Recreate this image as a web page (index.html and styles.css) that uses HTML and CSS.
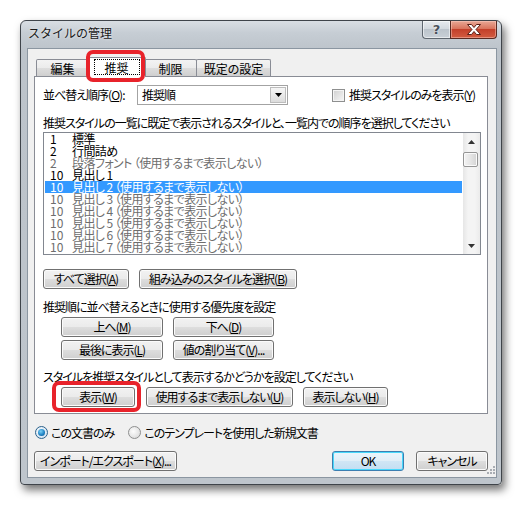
FILE: index.html
```html
<!DOCTYPE html>
<html lang="ja">
<head>
<meta charset="utf-8">
<title>スタイルの管理</title>
<link rel="stylesheet" href="styles.css">
</head>
<body>
<div class="window">
  <div class="titlebar">
    <div class="title">スタイルの管理</div>
    <div class="caption-btns">
      <div class="cap help">?</div>
      <div class="cap close">
        <svg width="16" height="11" viewBox="0 0 16 11">
          <path d="M1.5 0.5 H5.5 L8 3.5 L10.5 0.5 H14.5 L10 5.5 L14.5 10.5 H10.5 L8 7.5 L5.5 10.5 H1.5 L6 5.5 Z" fill="#fff" stroke="#5a1f16" stroke-width="1" stroke-linejoin="round"/>
        </svg>
      </div>
    </div>
  </div>
  <div class="client">
    <div class="tabs">
      <div class="tab t-edit">編集</div>
      <div class="tab active"><span class="focus">推奨</span></div>
      <div class="tab t-limit">制限</div>
      <div class="tab t-default">既定の設定</div>
    </div>
    <div class="panel">
      <div class="sort-row">
        <span class="sort-label">並べ替え順序(<u>O</u>):</span>
        <div class="combo">
          <span class="combo-text">推奨順</span>
          <div class="drop"><svg width="7" height="4" viewBox="0 0 7 4"><path d="M0 0 H7 L3.5 4 Z" fill="#000"/></svg></div>
        </div>
        <div class="check"><span class="box"></span><span>推奨スタイルのみを表示(<u>Y</u>)</span></div>
      </div>
      <div class="caption first-cap">推奨スタイルの一覧に既定で表示されるスタイルと、一覧内での順序を選択してください</div>
      <div class="listbox">
        <div class="items">
          <div class="item"><span class="num">1</span><span>標準</span></div>
          <div class="item"><span class="num">2</span><span>行間詰め</span></div>
          <div class="item dim"><span class="num">2</span><span>段落フォント （使用するまで表示しない）</span></div>
          <div class="item"><span class="num">10</span><span>見出し 1</span></div>
          <div class="item selected"><span class="num">10</span><span>見出し 2 （使用するまで表示しない）</span></div>
          <div class="item dim"><span class="num">10</span><span>見出し 3 （使用するまで表示しない）</span></div>
          <div class="item dim"><span class="num">10</span><span>見出し 4 （使用するまで表示しない）</span></div>
          <div class="item dim"><span class="num">10</span><span>見出し 5 （使用するまで表示しない）</span></div>
          <div class="item dim"><span class="num">10</span><span>見出し 6 （使用するまで表示しない）</span></div>
          <div class="item dim"><span class="num">10</span><span>見出し 7 （使用するまで表示しない）</span></div>
        </div>
        <div class="vscroll">
          <div class="arrow"><svg width="7" height="4" viewBox="0 0 7 4"><path d="M0 4 H7 L3.5 0 Z" fill="#333"/></svg></div>
          <div class="track"><div class="thumb"></div></div>
          <div class="arrow"><svg width="7" height="4" viewBox="0 0 7 4"><path d="M0 0 H7 L3.5 4 Z" fill="#333"/></svg></div>
        </div>
      </div>
      <div class="btn-row row-select">
        <div class="btn w-all">すべて選択(<u>A</u>)</div>
        <div class="btn w-builtin">組み込みのスタイルを選択(<u>B</u>)</div>
      </div>
      <div class="caption cap-priority">推奨順に並べ替えるときに使用する優先度を設定</div>
      <div class="prio-grid">
        <div class="btn">上へ(<u>M</u>)</div>
        <div class="btn">下へ(<u>D</u>)</div>
        <div class="btn">最後に表示(<u>L</u>)</div>
        <div class="btn">値の割り当て(<u>V</u>)...</div>
      </div>
      <div class="caption cap-show">スタイルを推奨スタイルとして表示するかどうかを設定してください</div>
      <div class="btn-row row-show">
        <div class="btn w-show">表示(<u>W</u>)</div>
        <div class="btn w-until">使用するまで表示しない(<u>U</u>)</div>
        <div class="btn w-hide">表示しない(<u>H</u>)</div>
      </div>
    </div>
    <div class="radio-row">
      <div class="radio-opt"><span class="radio on"></span><span>この文書のみ</span></div>
      <div class="radio-opt second"><span class="radio"></span><span>このテンプレートを使用した新規文書</span></div>
    </div>
    <div class="bottom-row">
      <div class="btn w-import">インポート/エクスポート(<u>X</u>)...</div>
      <div class="btn default w-ok">OK</div>
      <div class="btn w-cancel">キャンセル</div>
    </div>
    <svg class="grip" width="10" height="10" viewBox="0 0 10 10">
      <g fill="#a9adb3">
        <rect x="8" y="0" width="2" height="2"/>
        <rect x="5" y="3" width="2" height="2"/><rect x="8" y="3" width="2" height="2"/>
        <rect x="2" y="6" width="2" height="2"/><rect x="5" y="6" width="2" height="2"/><rect x="8" y="6" width="2" height="2"/>
      </g>
    </svg>
  </div>
</div>
<div class="mark mark-tab"></div>
<div class="mark mark-show"></div>
</body>
</html>
```

FILE: styles.css
```css
* { box-sizing: border-box; }
html, body { margin: 0; padding: 0; }
body {
  width: 524px;
  height: 505px;
  background: #fff;
  font-family: "Noto Sans CJK JP", "Noto Sans", sans-serif;
  font-size: 12px;
  line-height: 14px;
  letter-spacing: -1px;
  color: #000;
  font-feature-settings: "palt";
  position: relative;
  overflow: hidden;
}
u { text-decoration: underline; text-underline-offset: 1px; }

.window {
  margin: 20px 0 0 20px;
  width: 482px;
  height: 465px;
  border: 1px solid #3f444a;
  border-radius: 6px 6px 4px 4px;
  background: linear-gradient(#d9dee3 0, #c6cdd4 12px, #bcc3ca 30px, #bec5cc 100%);
  box-shadow: 3px 5px 9px rgba(0,0,0,0.55);
  padding: 0 4px 6px 6px;
  display: flex;
  flex-direction: column;
}
.titlebar {
  height: 27px;
  display: flex;
  align-items: flex-start;
}
.title {
  margin: 5px 0 0 1px;
  font-feature-settings: normal;
  letter-spacing: 0;
  color: #1a1a1a;
  text-shadow: 0 0 3px rgba(255,255,255,0.8);
}
.caption-btns { margin-left: auto; display: flex; }
.cap {
  height: 18px;
  display: flex;
  align-items: center;
  justify-content: center;
  border: 1px solid #5f6770;
  border-top: none;
}
.help {
  width: 28px;
  border-radius: 0 0 0 4px;
  border-right: none;
  background: linear-gradient(#e7ebef 0%, #d3d9df 45%, #bcc4cc 50%, #c9d0d7 100%);
  box-shadow: inset 0 0 0 1px rgba(255,255,255,0.55);
  font-family: "DejaVu Sans", sans-serif;
  font-weight: bold;
  font-size: 13px;
  letter-spacing: 0;
  color: #4a515b;
  text-shadow: 0 0 2px #fff;
  line-height: 16px;
}
.close {
  width: 47px;
  border-radius: 0 0 4px 0;
  border-color: #5a2a22;
  background: linear-gradient(#e9a896 0%, #d9745d 45%, #c4402a 50%, #d25c41 100%);
  box-shadow: inset 0 0 0 1px rgba(255,210,200,0.45);
}

.client {
  flex: 1;
  position: relative;
  background: #f0f0f0;
  border: 1px solid #8b96a1;
  display: flex;
  flex-direction: column;
}
.tabs {
  height: 27px;
  padding-left: 8px;
  display: flex;
  align-items: flex-end;
  letter-spacing: 0;
}
.tab {
  height: 17px;
  border: 1px solid #898c95;
  border-bottom: none;
  border-radius: 2px 2px 0 0;
  background: linear-gradient(#f3f3f3 0%, #ebebeb 50%, #dddddd 51%, #cfcfcf 100%);
  display: flex;
  align-items: center;
  justify-content: center;
  line-height: 15px;
}
.t-edit { width: 53px; }
.t-limit { width: 53px; }
.t-default { width: 75px; margin-left: -1px; }
.tab.active {
  width: 59px;
  height: 20px;
  margin: 0 -2px -1px -2px;
  position: relative;
  z-index: 1;
  background: #fff;
  align-items: flex-start;
  padding-top: 1px;
}
.focus {
  width: 46px;
  height: 16px;
  border: 1px dotted #000;
  display: flex;
  align-items: center;
  justify-content: center;
}

.panel {
  margin: 0 8px 0 6px;
  height: 338px;
  background: #fff;
  border: 1px solid #898c95;
  padding: 8px 0 0 8px;
  display: flex;
  flex-direction: column;
  align-items: flex-start;
}
.sort-row {
  height: 20px;
  display: flex;
  align-items: center;
}
.sort-label { width: 94px; white-space: nowrap; }
.combo {
  width: 151px;
  height: 20px;
  border: 1px solid #a3a3a3;
  display: flex;
  align-items: center;
  padding: 1px;
}
.combo-text { flex: 1; padding-left: 3px; }
.drop {
  width: 16px;
  height: 16px;
  border: 1px solid #bdbdbd;
  background: linear-gradient(#f6f6f6, #dcdcdc);
  display: flex;
  align-items: center;
  justify-content: center;
}
.check {
  margin-left: 44px;
  display: flex;
  align-items: center;
  gap: 4px;
  white-space: nowrap;
}
.box {
  width: 13px;
  height: 13px;
  border: 1px solid #8e8f8f;
  background: linear-gradient(135deg, #cfcfcf, #f7f7f7);
  box-shadow: inset 0 0 0 1px #f4f4f4;
}
.caption { height: 14px; white-space: nowrap; }
.first-cap { margin-top: 11px; }

.listbox {
  margin-top: 2px;
  width: 438px;
  height: 123px;
  border: 1px solid #828790;
  display: flex;
}
.items { flex: 1; padding: 0 1px; }
.item {
  height: 12px;
  line-height: 12px;
  display: flex;
  padding-left: 5px;
  white-space: pre;
  letter-spacing: -0.6px;
}
.num { width: 22px; letter-spacing: 0; }
.item.dim { color: #6d6d6d; }
.item.selected { background: #3399ff; color: #fff; }
.vscroll {
  width: 17px;
  display: flex;
  flex-direction: column;
  background: linear-gradient(to right, #e6e6e6, #f4f4f4 30%, #f4f4f4 70%, #ebebeb);
}
.arrow {
  height: 17px;
  display: flex;
  align-items: center;
  justify-content: center;
}
.track { flex: 1; padding: 2px 2px 0 0; }
.thumb {
  width: 15px;
  height: 15px;
  border: 1px solid #959595;
  border-radius: 2px;
  background: linear-gradient(to right, #f3f3f3, #e5e5e5 50%, #d3d3d3);
  box-shadow: inset 0 0 0 1px #fafafa;
}

.btn {
  height: 20px;
  border: 1px solid #707070;
  border-radius: 3px;
  background: linear-gradient(#f2f2f2 0%, #ebebeb 48%, #dddddd 52%, #cfcfcf 100%);
  box-shadow: inset 0 0 0 1px #fbfbfb;
  display: flex;
  align-items: center;
  justify-content: center;
  white-space: nowrap;
}
.btn.default {
  border-color: #3c7fb1;
  box-shadow: inset 0 0 0 1px #48d8fb;
  background: linear-gradient(#eaf5fc 0%, #e1eef7 48%, #d0e6f5 52%, #c3def2 100%);
}
.btn-row { display: flex; }
.row-select { margin-top: 14px; gap: 10px; }
.w-all { width: 86px; }
.w-builtin { width: 158px; }
.cap-priority { margin-top: 11px; }
.prio-grid {
  margin: 3px 0 0 18px;
  display: grid;
  grid-template-columns: 102px 101px;
  column-gap: 10px;
  row-gap: 3px;
}
.cap-show { margin-top: 10px; }
.row-show { margin: 3px 0 0 18px; }
.w-show { width: 74px; }
.w-until { width: 147px; margin-left: 11px; }
.w-hide { width: 85px; margin-left: 10px; }

.radio-row {
  margin: 12px 0 0 7px;
  height: 13px;
  display: flex;
  align-items: center;
}
.radio-opt { display: flex; align-items: center; gap: 3px; }
.radio-opt.second { margin-left: 14px; }
.radio {
  width: 13px;
  height: 13px;
  border-radius: 50%;
  border: 1px solid #8e8f8f;
  background: radial-gradient(circle at 40% 40%, #fdfdfd, #d4d4d4);
  position: relative;
}
.radio.on { border-color: #2c628b; background: radial-gradient(circle at 40% 40%, #fafcfe, #c9dcee); }
.radio.on::after {
  content: "";
  position: absolute;
  left: 2px; top: 2px;
  width: 7px; height: 7px;
  border-radius: 50%;
  background: radial-gradient(circle at 40% 35%, #7ad0f7, #1a7ec0 60%, #0c4f86);
}
.bottom-row {
  margin: 12px 8px 0 6px;
  display: flex;
}
.w-import { width: 143px; }
.w-ok { width: 72px; margin-left: auto; }
.w-cancel { width: 72px; margin-left: 12px; }
.grip { position: absolute; right: 1px; bottom: 1px; }

.mark {
  position: absolute;
  border: 4px solid #e8232b;
  border-radius: 7px;
  z-index: 5;
}
.mark-tab { left: 86px; top: 50px; width: 59px; height: 32px; }
.mark-show { left: 52px; top: 381px; width: 89px; height: 31px; }
```
